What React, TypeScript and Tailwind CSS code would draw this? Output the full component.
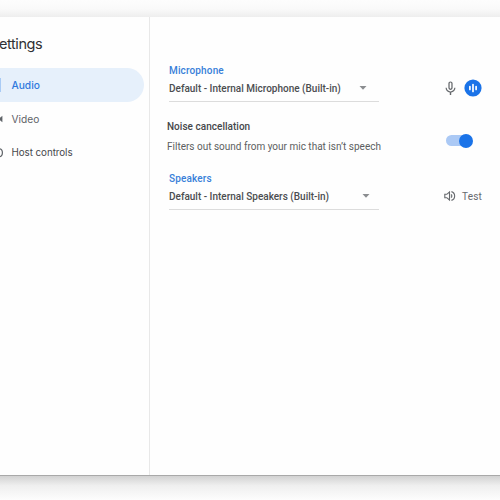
import React from "react";
import { MdMicNone } from "react-icons/md";

const navItems = [
  { id: "audio", label: "Audio", active: true },
  { id: "video", label: "Video", active: false },
  { id: "host", label: "Host controls", active: false },
];

const NavIcon = ({ id }: { id: string }) => {
  if (id === "audio") {
    return <span className="block w-px h-[14px] bg-[#a9cbf5]" />;
  }
  if (id === "video") {
    return (
      <svg width="3" height="8" viewBox="0 0 3 8" fill="#5f6368">
        <path d="M0 2.8 2.4 0.8V7.2L0 5.2Z" />
      </svg>
    );
  }
  return (
    <svg width="4" height="10" viewBox="0 0 4 10" fill="none" stroke="#5f6368" strokeWidth="1.2">
      <path d="M-1 .8C1.4 .8 2.4 2.4 2.4 4.8S1.2 8.8 -1 8.8" />
    </svg>
  );
};

const Sidebar = () => (
  <aside className="w-[150px] shrink-0 border-r border-[#e8e8e8] font-['Inter',sans-serif]">
    <h1 className="mt-[17px] -ml-px h-5 leading-5 text-[14.5px] tracking-[-0.42px] text-[#303134] whitespace-nowrap">
      ettings
    </h1>
    <nav className="mt-[14px]">
      {navItems.map((item) => (
        <div
          key={item.id}
          className={`flex items-center h-[34px] mr-[5px] rounded-r-full text-[10.2px] whitespace-nowrap ${
            item.active ? "bg-[#e6f0fb] text-[#3079dd] font-medium" : "text-[#5f6368]"
          }`}
        >
          <span className="w-[11.5px] shrink-0">
            <NavIcon id={item.id} />
          </span>
          <span className={item.id === "host" ? "text-[9.8px] tracking-[-0.05px] text-[#45484c]" : "pt-px"}>
            {item.label}
          </span>
        </div>
      ))}
    </nav>
  </aside>
);

const DeviceSelect = ({ label, value, arrow }: { label: string; value: string; arrow: string }) => (
  <div className="w-[210px] ml-[2px] border-b border-[#dcdcdc]">
    <div className="pt-px h-[15px] leading-[14px] text-[10px] font-medium tracking-[0.15px] text-[#387fd9]">{label}</div>
    <div className="flex items-center justify-between h-[20px] mb-[3px] text-[10px] font-medium text-[#4b4d50] whitespace-nowrap">
      <span>{value}</span>
      <svg className={arrow} width="8" height="4" viewBox="0 0 8 4" fill="#8b8d90">
        <path d="M0.5 0h7L4 3.8Z" />
      </svg>
    </div>
  </div>
);

const App = () => {
  return (
    <div className="h-[500px] w-[500px] overflow-hidden flex flex-col bg-[#fdfdfd]">
      <div className="h-[17px] shrink-0 bg-linear-to-b from-[#fdfdfd] via-[#fafafa] to-[#eeeeee]" />
      <div className="flex h-[458px] shrink-0 bg-[#fefefe]">
        <Sidebar />
        <main className="flex-1 pl-[17px] pt-[46px] font-['Roboto',sans-serif]">
          <div className="flex">
            <DeviceSelect label="Microphone" value="Default - Internal Microphone (Built-in)" arrow="mr-[12px]" />
            <div className="flex items-center ml-[65px] mt-[16px] h-[18px] gap-[5px]">
              <MdMicNone className="w-[17px] h-[17px] -ml-[2px] text-[#66696d]" />
              <svg width="18" height="18" viewBox="0 0 18 18">
                <circle cx="9" cy="9" r="8.6" fill="#1a73e8" />
                <path d="M5.9 7.6v2.8M9 5.6v6.8M12.1 7.6v2.8" stroke="#fff" strokeWidth="1.7" strokeLinecap="round" />
              </svg>
            </div>
          </div>

          <div className="flex items-center mt-[18px] h-[34px]">
            <div className="w-[279px] whitespace-nowrap">
              <div className="h-[14px] leading-[14px] text-[10px] font-medium tracking-[0.03px] text-[#45474a]">
                Noise cancellation
              </div>
              <div className="mt-[6px] h-[14px] leading-[14px] text-[10px] text-[#5c5e61]">
                Filters out sound from your mic that isn’t speech
              </div>
            </div>
            <div className="flex items-center w-[26px] h-[11px] mt-[7px] rounded-full bg-[#abc9f5]">
              <span className="block w-[14px] h-[14px] ml-[13px] shrink-0 rounded-full bg-[#1a73e8]" />
            </div>
          </div>

          <div className="flex mt-[17px]">
            <DeviceSelect label="Speakers" value="Default - Internal Speakers (Built-in)" arrow="mr-[9px]" />
            <div className="flex items-center ml-[65px] mt-[16px] h-[18px] gap-[6px] text-[10px] text-[#66696d]">
              <svg width="12" height="12" viewBox="0 0 12 12" fill="none" stroke="#66696d" strokeWidth="1.1">
                <path d="M.8 4.3h2L5.5 2v8L2.8 7.7h-2Z" />
                <path d="M7.2 4v4c1.3-.9 1.3-3.1 0-4Z" fill="#66696d" strokeWidth=".4" />
                <path d="M7.4 1.6a4.6 4.6 0 0 1 0 8.8" />
              </svg>
              <span className="tracking-[0.2px]">Test</span>
            </div>
          </div>
        </main>
      </div>
      <div className="h-px shrink-0 bg-[#a9a9a9]" />
      <div className="flex-1 bg-linear-to-b from-[#d2d2d2] via-[#efefef] via-40% to-[#fdfdfd]" />
    </div>
  );
};

export default App;
